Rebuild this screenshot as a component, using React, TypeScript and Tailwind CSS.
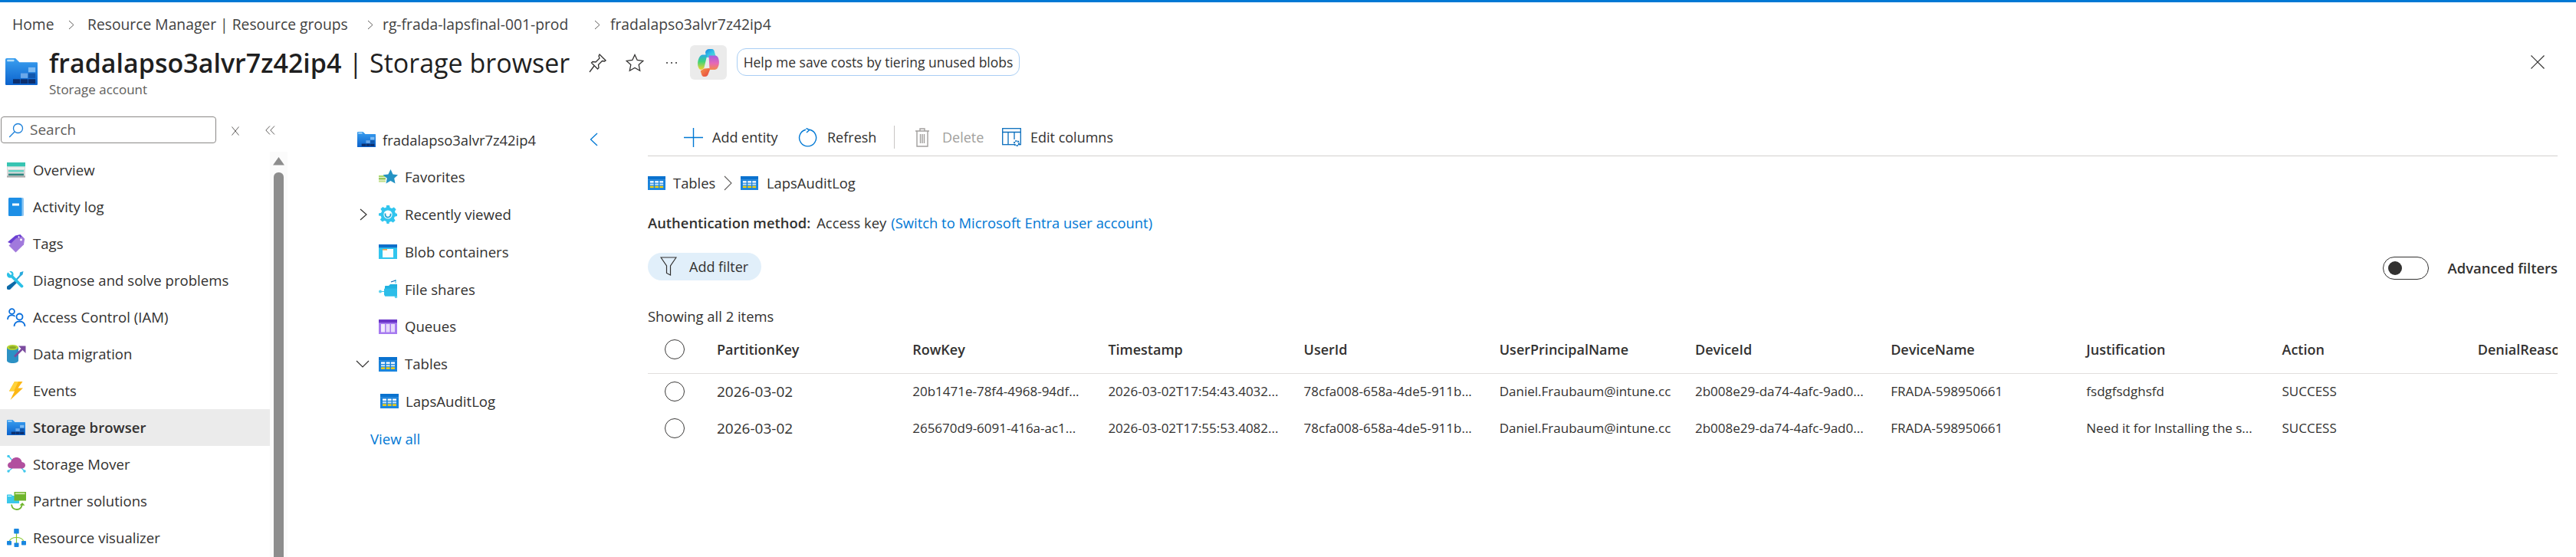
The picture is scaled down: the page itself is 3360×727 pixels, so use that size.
import React from "react";

const F = "font-['Open_Sans','Noto_Sans',sans-serif]";

function Folder({ w, h, id }: { w: number; h: number; id: string }) {
  return (
    <svg width={w} height={h} viewBox="0 0 24 20" className="shrink-0">
      <defs>
        <linearGradient id={id} x1="0" y1="0" x2="0" y2="1">
          <stop offset="0" stopColor="#3a9ff0" />
          <stop offset="1" stopColor="#0b62cc" />
        </linearGradient>
      </defs>
      <path d="M0 1a1 1 0 0 1 1-1h6.5l3 3H23.4a.6.6 0 0 1 .6.6V19.4a.6.6 0 0 1-.6.6H.6a.6.6 0 0 1-.6-.6z" fill={`url(#${id})`} />
      <rect x="1.2" y="1" width="5.4" height="1.4" rx=".5" fill="#b5def9" />
      <rect x="5.700" y="15.600" width="5.300" height="3.300" fill="#0c2f6e" />
      <rect x="11.400" y="15.600" width="5.300" height="3.300" fill="#0c2f6e" />
      <rect x="17.100" y="15.600" width="5.300" height="3.300" fill="#0c2f6e" />
      <rect x="11.400" y="11.200" width="5.300" height="3.600" fill="#6aa8ea" />
      <rect x="17.100" y="11.200" width="5.300" height="3.600" fill="#1157ad" />
      <rect x="17.100" y="6.800" width="5.300" height="3.600" fill="#7fbbf2" />
    </svg>
  );
}

function TableIcon({ id, w = 24 }: { id: string; w?: number }) {
  return (
    <svg width={w} height={(w * 19) / 24} viewBox="0 0 24 19" className="shrink-0">
      <defs>
        <linearGradient id={id} x1="0" y1="0" x2="0" y2="1">
          <stop offset="0" stopColor="#0a78d6" />
          <stop offset="1" stopColor="#0f7fdc" />
        </linearGradient>
      </defs>
      <rect width="24" height="19" fill="#8fc4f0" />
      <rect width="24" height="4.6" fill="#0a72cf" />
      <rect x="0" y="4.6" width="24" height="14.4" fill={`url(#${id})`} opacity=".9" />
      <g fill="#ffffff">
        <rect x="3" y="6.5" width="5" height="2.4" />
        <rect x="9.6" y="6.5" width="5" height="2.4" />
        <rect x="16" y="6.5" width="5" height="2.4" />
      </g>
      <g fill="#b8dcf8">
        <rect x="3" y="10" width="5" height="2.4" />
        <rect x="9.6" y="10" width="5" height="2.4" />
        <rect x="16" y="10" width="5" height="2.4" />
      </g>
      <g fill="#f9d20a">
        <rect x="3" y="13.4" width="5" height="2.4" />
        <rect x="9.6" y="13.4" width="5" height="2.4" />
        <rect x="16" y="13.4" width="5" height="2.4" />
      </g>
    </svg>
  );
}

const icons: Record<string, React.ReactNode> = {
  overview: (
    <svg width="24" height="20" viewBox="0 0 24 20">
      <rect width="24" height="5.5" fill="#37c4b2" />
      <rect y="5.5" width="24" height="14" fill="#d9d9d9" />
      <rect x="1" y="6.5" width="22" height="2.2" fill="#f4f4f4" />
      <rect x="2" y="10" width="20" height="2.4" fill="#5fd3c4" />
      <rect x="2" y="14.6" width="20" height="2.6" fill="#2f8580" />
      <rect y="17.5" width="24" height="2" fill="#a9a9a9" />
    </svg>
  ),
  activity: (
    <svg width="22" height="24" viewBox="0 0 22 24">
      <rect x="1" width="20" height="24" rx="1.5" fill="#8fc7f2" />
      <rect x="1" width="17.5" height="24" rx="1.5" fill="#1d8fe6" />
      <rect x="6" y="7.5" width="9" height="3" fill="#ffffff" />
    </svg>
  ),
  tags: (
    <svg width="24" height="24" viewBox="0 0 24 24">
      <path d="M1 10 11 1.5 17.5 0 21 4 11.5 15z" fill="#6b3fd2" />
      <path d="M11.5 23.5 2.5 14.5 12 5 20.5 2.8 23.2 5.8 22 13.2z" fill="#a179dc" />
      <circle cx="18.5" cy="7" r="1.4" fill="#ffffff" />
      <circle cx="15.5" cy="3.2" r="1" fill="#ffffff" />
    </svg>
  ),
  diagnose: (
    <svg width="24" height="24" viewBox="0 0 24 24">
      <path d="M17 1.5l4.5-1.5-1 4.5-2.5 2L13 12l-1.5-1.5 5-5.5z" fill="#2aa9dc" />
      <path d="M10.5 12.5 13 15l-8.5 8.5a1.7 1.7 0 0 1-4-4z" fill="#0d6aa8" />
      <path d="M1.5 1.5 5 5l1.6-1.6L3.2 0C6 -.7 8.6 1 8.6 3.8c0 .7-.1 1.3-.4 1.9L21 18.5c1.5 1.5-1 4-2.6 2.7L5.6 8.4C3 9.5-.3 7.5 0 4.2c0-.9.6-2 1.5-2.7z" fill="#2ac0e6" />
    </svg>
  ),
  access: (
    <svg width="25" height="25" viewBox="0 0 25 25" fill="none" stroke="#0a6fdc" strokeWidth="1.8">
      <circle cx="6.5" cy="4.5" r="3.4" />
      <path d="M1 15c0-3.5 2.2-5.7 5.5-5.7 1.6 0 3 .5 4 1.5" />
      <circle cx="16.5" cy="11.5" r="4" />
      <path d="M9.5 24c0-4 3-6.5 7-6.5s7 2.5 7 6.5" />
    </svg>
  ),
  migration: (
    <svg width="25" height="24" viewBox="0 0 25 24">
      <path d="M0 3.5v17C0 22.5 3.2 24 7.5 24s7.5-1.5 7.5-3.5v-17z" fill="#2c91c4" />
      <ellipse cx="7.5" cy="3.5" rx="7.5" ry="3.5" fill="#b4d334" />
      <ellipse cx="7.5" cy="3.5" rx="4.6" ry="1.8" fill="#8ba929" />
      <path d="M10 15.5 20 5.5" stroke="#7b4b9e" strokeWidth="2.6" />
      <path d="M15 1.5h9.5V11z" fill="#7b4b9e" />
    </svg>
  ),
  events: (
    <svg width="18" height="24" viewBox="0 0 18 24">
      <path d="M7 0h10.5L11.5 8.5H18L1.5 24 7 12.5H0z" fill="#fcb714" />
      <path d="M7 0h5L6 12.5H0z" fill="#ffd33c" />
    </svg>
  ),
  mover: (
    <svg width="25" height="24" viewBox="0 0 25 24">
      <g stroke="#40c8ec" strokeWidth="1.2">
        <path d="M2 1 7 7M23 21l-4-4M2 21l5-4" />
      </g>
      <circle cx="2" cy="1.5" r="1.7" fill="#40c8ec" />
      <circle cx="23" cy="21" r="1.7" fill="#40c8ec" />
      <circle cx="2" cy="21" r="1.7" fill="#40c8ec" />
      <path d="M6 17.5c-3.4 0-5-2-5-4.2 0-2.3 1.8-4 4-4C6 5 9 3 12.5 3c3.800 0 6.700 2.700 7 6.100 2.400.2 4.500 1.700 4.500 4.200s-2 4.200-4.800 4.200z" fill="#b14f9e" />
    </svg>
  ),
  partner: (
    <svg width="25" height="25" viewBox="0 0 25 25">
      <path d="M0 4a.6.6 0 0 1 .6-.6H6l1.500 1.500H16V15H0z" fill="#3bc8ea" />
      <rect x="1" y="5" width="5" height="1" fill="#d6f3fb" />
      <rect x="9.500" y="0" width="15.500" height="11.500" fill="#6fb52c" />
      <rect x="11" y="1.200" width="12.500" height="2" fill="#cfe8a8" />
      <path d="M6 16.500c.5 4 3 6.500 7 6.500s6-2.500 6.700-6" fill="none" stroke="#6fb52c" strokeWidth="1.800" />
      <path d="M16.500 17.500l3.700-3.500 3.300 3.800z" fill="#6fb52c" />
    </svg>
  ),
  visual: (
    <svg width="25" height="24" viewBox="0 0 25 24">
      <g stroke="#86c832" strokeWidth="1.200" fill="none">
        <path d="M12.500 6V20" />
        <path d="M3 17c1.500-4.500 5-5.500 9.500-5.500S20.500 12.500 22 17" />
      </g>
      <rect x="9.200" y="0" width="6.500" height="6.500" rx=".8" fill="#1a87e0" />
      <rect x="0" y="16" width="6" height="5.500" rx=".8" fill="#1a87e0" />
      <rect x="19" y="16" width="6" height="5.500" rx=".8" fill="#1a87e0" />
      <rect x="9.500" y="18.500" width="6" height="5.500" rx=".8" fill="#1a87e0" />
    </svg>
  ),
  favorites: (
    <svg width="25" height="20" viewBox="0 0 25 20">
      <rect x="0" y="8" width="9" height="2.300" fill="#a9d86a" />
      <rect x="0" y="11.200" width="9" height="2.300" fill="#8cc24e" />
      <rect x="0" y="14.400" width="9" height="2.300" fill="#c2e08f" />
      <path d="M15.500 0l3 6.400 6.500.9-4.800 4.500 1.300 6.700-6-3.400-6 3.400 1.300-6.700L5.500 7.300l6.900-.9z" fill="#2493c4" />
    </svg>
  ),
  recent: (
    <svg width="24" height="24" viewBox="0 0 24 24">
      <path d="M10 0h4l.7 3.100 2.400 1 2.700-1.700 2.800 2.800-1.700 2.700 1 2.400L24 11v3l-3.100.7-1 2.400 1.700 2.700-2.800 2.800-2.700-1.700-2.400 1L13.500 24h-3l-.7-3.100-2.400-1-2.700 1.700-2.800-2.800 1.700-2.700-1-2.400L0 13.500v-3l3.100-.7 1-2.400L2.400 4.700l2.800-2.800 2.700 1.700 2-1z" fill="#31c5ee" />
      <circle cx="12" cy="12" r="5.600" fill="#ffffff" />
      <path d="M8.700 10.500c-.8 3 1 5.200 3.300 5.200s4-2 3.400-5" fill="none" stroke="#1ba3d6" strokeWidth="1.800" />
    </svg>
  ),
  blob: (
    <svg width="24" height="19" viewBox="0 0 24 19">
      <rect width="24" height="19" fill="#31c5ee" />
      <rect width="24" height="4.200" fill="#0f6fca" />
      <rect x="5" y="6" width="14" height="11" fill="#fdfdfd" />
      <rect x="5" y="6" width="6" height="1.600" fill="#f6a141" />
    </svg>
  ),
  file: (
    <svg width="25" height="25" viewBox="0 0 25 25">
      <g stroke="#40c8ec" strokeWidth="1">
        <path d="M2 15.500h6M22 21v3M22 5V1" />
      </g>
      <circle cx="2" cy="15.500" r="2" fill="#5ad2ef" />
      <circle cx="22.500" cy="22.500" r="1.800" fill="#5ad2ef" />
      <circle cx="22" cy="1.200" r="1.100" fill="#5ad2ef" />
      <path d="M8 9a1 1 0 0 1 1-1h4l2-2h9v14.500a.9.900 0 0 1-.9.900H8z" fill="#1fb1e0" />
      <path d="M7 12.500a1 1 0 0 1 1-1h16v9a.9.900 0 0 1-.9.900H8.500L7 20z" fill="#2cbde8" />
      <path d="M16 3l6-2" stroke="#0a5fa8" strokeWidth="1.200" />
    </svg>
  ),
  queues: (
    <svg width="24" height="19" viewBox="0 0 24 19">
      <rect width="24" height="19" fill="#a67af0" />
      <rect width="24" height="4.200" fill="#6a35c8" />
      <rect x="3" y="6" width="5" height="10.500" fill="#f1e9fc" />
      <rect x="9.500" y="6" width="5" height="10.500" fill="#e6d9fa" />
      <rect x="16" y="6" width="5" height="10.500" fill="#e6d9fa" />
    </svg>
  ),
};

const Search = (
  <svg width="20" height="20" viewBox="0 0 20 20" fill="none" stroke="#1a7fd9" strokeWidth="1.300">
    <circle cx="12.500" cy="7.500" r="6" />
    <path d="M8 12 1.200 19" />
  </svg>
);

function NavRow({ icon, label, active }: { icon: string; label: string; active?: boolean }) {
  return (
    <div className={`flex h-[48px] items-center text-[18.600px] ${active ? "bg-[#ebebeb] font-semibold" : ""}`}>
      <div className="flex w-[43px] shrink-0 justify-center pr-[4px] pl-[3px]">
        {active ? <Folder w={24} h={20} id="navfolder" /> : icons[icon]}
      </div>
      <span className="whitespace-nowrap">{label}</span>
    </div>
  );
}

function TreeRow({ chevron, icon, label, tight }: { chevron?: "right" | "down"; icon: React.ReactNode; label: string; tight?: boolean }) {
  return (
    <div className="flex h-[48.800px] items-center text-[18.600px]">
      <div className="flex w-[28px] shrink-0 items-center">
        {chevron === "right" && (
          <svg width="11" height="16" viewBox="0 0 11 16" fill="none" stroke="#323130" strokeWidth="1.200" className="ml-[3px]">
            <path d="M1 1l8 7-8 7" />
          </svg>
        )}
        {chevron === "down" && (
          <svg width="18" height="11" viewBox="0 0 18 11" fill="none" stroke="#323130" strokeWidth="1.200" className="ml-[-2px]">
            <path d="M1 1l8 8 8-8" />
          </svg>
        )}
      </div>
      <div className={`flex w-[34px] shrink-0 items-center ${tight ? "pl-[2px]" : ""}`}>{icon}</div>
      <span className={`whitespace-nowrap ${tight ? "ml-[1px]" : ""}`}>{label}</span>
    </div>
  );
}

const columns = ["PartitionKey", "RowKey", "Timestamp", "UserId", "UserPrincipalName", "DeviceId", "DeviceName", "Justification", "Action", "DenialReason"];
const rows = [
  ["2026-03-02", "20b1471e-78f4-4968-94df...", "2026-03-02T17:54:43.4032...", "78cfa008-658a-4de5-911b...", "Daniel.Fraubaum@intune.cc", "2b008e29-da74-4afc-9ad0...", "FRADA-598950661", "fsdgfsdghsfd", "SUCCESS", ""],
  ["2026-03-02", "265670d9-6091-416a-ac1...", "2026-03-02T17:55:53.4082...", "78cfa008-658a-4de5-911b...", "Daniel.Fraubaum@intune.cc", "2b008e29-da74-4afc-9ad0...", "FRADA-598950661", "Need it for Installing the s...", "SUCCESS", ""],
];

function Radio() {
  return (
    <div className="flex w-[90px] shrink-0 pl-[22px]">
      <div className="h-[26px] w-[26px] rounded-full border-[1.5px] border-[#3b3a39]" />
    </div>
  );
}

export default function App() {
  return (
    <div className={`${F} flex h-[727px] w-[3360px] flex-col overflow-hidden bg-white text-[#323130]`}>
      <div className="h-[3px] shrink-0 bg-[#0078d4]" />

      <div className="flex h-[58px] shrink-0 items-center pl-[16px] text-[19.300px] text-[#424242]">
        <span className="w-[73px] shrink-0">Home</span>
        <span className="w-[25px] shrink-0"><Chevron /></span>
        <span className="w-[365px] shrink-0 whitespace-nowrap">Resource Manager | Resource groups</span>
        <span className="w-[20px] shrink-0"><Chevron /></span>
        <span className="w-[276px] shrink-0 whitespace-nowrap">rg-frada-lapsfinal-001-prod</span>
        <span className="w-[21px] shrink-0"><Chevron /></span>
        <span className="whitespace-nowrap">fradalapso3alvr7z42ip4</span>
      </div>

      <div className="flex h-[79px] shrink-0 items-start">
        <div className="w-[64px] shrink-0 pl-[7px] pt-[15px]">
          <Folder w={42} h={35} id="hdrfolder" />
        </div>
        <div className="w-[700px] shrink-0">
          <div className="flex h-[42px] items-center whitespace-nowrap text-[34px] text-[#1f1f1f]">
            <span className="font-semibold">fradalapso3alvr7z42ip4</span>
            <span className="ml-[9px] font-normal">|</span>
            <span className="ml-[9px] font-normal">Storage browser</span>
          </div>
          <div className="flex h-[28px] items-center text-[17px] text-[#605e5c]">Storage account</div>
        </div>
        <div className="mt-[5px] flex items-center">
          <div className="flex h-[32px] w-[32px] items-center justify-center">
            <svg width="24" height="26" viewBox="0 0 24 26" fill="none" stroke="#323130" strokeWidth="1.300">
              <path d="M14 2 22 10 20.500 11 17.500 10.500 12.500 15.500 13 19.500 11.500 21 3.500 13 5 11.500 9 12 14 7 13 4z" />
              <path d="M7 17 1 25" />
            </svg>
          </div>
          <div className="ml-[16px] flex h-[32px] w-[32px] items-center justify-center">
            <svg width="24" height="24" viewBox="0 0 24 24" fill="none" stroke="#323130" strokeWidth="1.300">
              <path d="M12 1.500l3.200 7 7.600.9-5.600 5.200 1.500 7.600L12 18.400 5.300 22.200l1.500-7.600L1.200 9.400l7.600-.9z" />
            </svg>
          </div>
          <div className="ml-[16px] flex h-[32px] w-[32px] items-center justify-center gap-[4px]">
            <i className="h-[2px] w-[2px] rounded-full bg-[#323130]" />
            <i className="h-[2px] w-[2px] rounded-full bg-[#323130]" />
            <i className="h-[2px] w-[2px] rounded-full bg-[#323130]" />
          </div>
        </div>
        <div className="ml-[8px] flex h-[45px] w-[48px] shrink-0 translate-y-[-2px] items-center justify-center rounded-[6px] bg-[#ebebeb]">
          <svg width="28" height="36" viewBox="0 0 28 36">
            <defs>
              <linearGradient id="cpa" x1="0" y1="0" x2="1" y2="1">
                <stop offset="0" stopColor="#1b7ee0" />
                <stop offset=".5" stopColor="#33c3e8" />
                <stop offset="1" stopColor="#6be0c2" />
              </linearGradient>
              <linearGradient id="cpb" x1="0" y1="0" x2="0" y2="1">
                <stop offset="0" stopColor="#2aa8e8" />
                <stop offset=".45" stopColor="#3ed47a" />
                <stop offset="1" stopColor="#f6d32c" />
              </linearGradient>
              <linearGradient id="cpc" x1="0" y1="0" x2="0" y2="1">
                <stop offset="0" stopColor="#a65de0" />
                <stop offset=".55" stopColor="#e667b5" />
                <stop offset="1" stopColor="#f58a4a" />
              </linearGradient>
              <linearGradient id="cpd" x1="0" y1="0" x2="1" y2="1">
                <stop offset="0" stopColor="#f6964a" />
                <stop offset="1" stopColor="#e6423f" />
              </linearGradient>
            </defs>
            <path d="M10 4C11 1.500 12.500 0 15 0h4c1.200 0 2 1 2.600 2.600L24 11H11z" fill="url(#cpa)" />
            <path d="M1 24C-.5 21 0 16 1.200 13 2.500 9.500 4 7.500 7.500 7.500h5L8.500 24c-.7 2-2.500 3-4.200 3-1.500 0-2.600-1.200-3.300-3z" fill="url(#cpb)" />
            <path d="M14.500 8.500h8c3 0 4.800 2.500 5.300 7 .4 3.500-.4 7-2 9.500-1 1.500-2.500 2-4.800 2H15.500z" fill="url(#cpc)" />
            <path d="M8.500 25.500 15.500 25 16 27 14 32c-.8 2.500-2 4-4.500 4H8c-1.500 0-2.300-1-2.800-2.500l-1.500-5z" fill="url(#cpd)" />
          </svg>
        </div>
        <div className="ml-[13px] mt-[2px] flex h-[36px] w-[369px] shrink-0 items-center justify-center rounded-[12px] border border-[#a9cef4] text-[17.500px] whitespace-nowrap text-[#323130]">
          Help me save costs by tiering unused blobs
        </div>
        <div className="ml-auto mr-[41px] mt-[11px]">
          <svg width="18" height="18" viewBox="0 0 18 18" fill="none" stroke="#323130" strokeWidth="1.200"><path d="M.5.5l17 17M17.500.5l-17 17" /></svg>
        </div>
      </div>

      <div className="flex min-h-0 flex-1">
        <div className="flex w-[375px] shrink-0 flex-col">
          <div className="flex pt-[12px]">
            <div className="ml-[1px] flex h-[35px] w-[281px] shrink-0 items-center rounded-[4px] border border-[#8a8886] pl-[9px] text-[19px] text-[#605e5c]">
              {Search}
              <span className="ml-[8px]">Search</span>
            </div>
            <div className="flex h-[35px] w-[48px] items-center justify-center pl-[1px] pt-[2px]">
              <svg width="10" height="12" viewBox="0 0 10 12" fill="none" stroke="#605e5c" strokeWidth="1"><path d="M.500.500l9 11M9.500.500l-9 11" /></svg>
            </div>
            <div className="flex h-[35px] w-[44px] items-center justify-center pt-[1px]">
              <svg width="13" height="12" viewBox="0 0 13 12" fill="none" stroke="#605e5c" strokeWidth="1"><path d="M6 .500.800 6 6 11.500M12 .500 6.800 6 12 11.500" /></svg>
            </div>
          </div>
          <div className="mt-[11px] flex min-h-0 flex-1">
            <div className="w-[352px] shrink-0 text-[#323130]">
              <NavRow icon="overview" label="Overview" />
              <NavRow icon="activity" label="Activity log" />
              <NavRow icon="tags" label="Tags" />
              <NavRow icon="diagnose" label="Diagnose and solve problems" />
              <NavRow icon="access" label="Access Control (IAM)" />
              <NavRow icon="migration" label="Data migration" />
              <NavRow icon="events" label="Events" />
              <NavRow icon="storage" label="Storage browser" active />
              <NavRow icon="mover" label="Storage Mover" />
              <NavRow icon="partner" label="Partner solutions" />
              <NavRow icon="visual" label="Resource visualizer" />
            </div>
            <div className="flex w-[23px] shrink-0 flex-col items-center bg-[#fbfbfb]">
              <svg width="15" height="11" viewBox="0 0 15 11" className="mt-[7px]"><path d="M7.500 0 15 10.500H0z" fill="#8d8d8d" /></svg>
              <div className="mt-[9px] w-[13px] flex-1 rounded-t-[6px] bg-[#8d8d8d]" />
            </div>
          </div>
        </div>

        <div className="w-[470px] shrink-0 pl-[91px] pt-[18px] text-[#323130]">
          <div className="flex h-[48.800px] w-[315px] items-center text-[18.400px]">
            <Folder w={24} h={20} id="treefolder" />
            <span className="ml-[9px] whitespace-nowrap">fradalapso3alvr7z42ip4</span>
            <svg width="11" height="18" viewBox="0 0 11 18" fill="none" stroke="#0078d4" strokeWidth="1.300" className="ml-auto mr-[1px]"><path d="M10 1 1.500 9 10 17" /></svg>
          </div>
          <TreeRow icon={icons.favorites} label="Favorites" />
          <TreeRow chevron="right" icon={icons.recent} label="Recently viewed" />
          <TreeRow icon={icons.blob} label="Blob containers" />
          <TreeRow icon={icons.file} label="File shares" />
          <TreeRow icon={icons.queues} label="Queues" />
          <TreeRow chevron="down" icon={<TableIcon id="t1" />} label="Tables" />
          <TreeRow icon={<TableIcon id="t2" />} label="LapsAuditLog" tight />
          <div className="flex h-[48.800px] items-center pl-[17px] text-[18.600px] text-[#0078d4]">View all</div>
        </div>

        <div className="mr-[24px] min-w-0 flex-1">
          <div className="flex h-[64px] items-center border-b border-[#d2d0ce] pl-[47px] pt-[15px] text-[18px]">
            <svg width="25" height="25" viewBox="0 0 25 25" stroke="#0078d4" strokeWidth="1.400"><path d="M12.500 0v25M0 12.500h25" /></svg>
            <span className="ml-[12px] w-[89px] whitespace-nowrap">Add entity</span>
            <svg width="25" height="25" viewBox="0 0 25 25" fill="none" stroke="#0078d4" strokeWidth="1.400" className="ml-[23px]">
              <path d="M10 2.200a11 11 0 1 0 5.200 0" />
              <path d="M10.500 .500 15 2.500 11 6" />
            </svg>
            <span className="ml-[13px] w-[62px] whitespace-nowrap">Refresh</span>
            <div className="ml-[25px] h-[30px] w-px bg-[#c8c6c4]" />
            <svg width="20" height="25" viewBox="0 0 20 25" fill="none" stroke="#a19f9d" strokeWidth="1.400" className="ml-[26px]">
              <path d="M1 4h18M7 4V1h6v3M3 4v20h14V4M7.500 8v12M10 8v12M12.500 8v12" />
            </svg>
            <span className="ml-[16px] w-[55px] whitespace-nowrap text-[#a19f9d]">Delete</span>
            <svg width="25" height="25" viewBox="0 0 25 25" fill="none" stroke="#0a6ebd" strokeWidth="1.300" className="ml-[23px]">
              <rect x=".700" y=".700" width="23.600" height="21" />
              <path d="M.700 5.500h23.600M8 5.500V21.700M16 5.500V15" />
              <circle cx="19" cy="20" r="3" fill="#fff" strokeWidth="2" strokeDasharray="2 1" />
            </svg>
            <span className="ml-[12px] whitespace-nowrap">Edit columns</span>
          </div>

          <div className="mt-[19px] flex h-[32px] items-center text-[18.400px]">
            <TableIcon id="b1" w={23} />
            <span className="ml-[10px] w-[52px]">Tables</span>
            <svg width="11" height="20" viewBox="0 0 11 20" fill="none" stroke="#605e5c" strokeWidth="1.100" className="ml-[14px]"><path d="M1 1l9 9-9 9" /></svg>
            <span className="ml-[11px]"><TableIcon id="b2" w={23} /></span>
            <span className="ml-[11px]">LapsAuditLog</span>
          </div>

          <div className="mt-[22px] flex h-[28px] items-center whitespace-nowrap text-[18.400px]">
            <span className="font-semibold">Authentication method:</span>
            <span className="ml-[8px]">Access key</span>
            <span className="ml-[6px] text-[#0078d4]">(Switch to Microsoft Entra user account)</span>
          </div>

          <div className="mt-[25px] flex h-[36px] items-center justify-between">
            <div className="flex h-[36px] w-[148px] items-center rounded-full bg-[#e1effa] pl-[16px] text-[18px]">
              <svg width="22" height="26" viewBox="0 0 22 26" fill="none" stroke="#323130" strokeWidth="1.200"><path d="M1 1h20l-7.500 11v12l-5-2.500V12z" /></svg>
              <span className="ml-[16px] whitespace-nowrap">Add filter</span>
            </div>
            <div className="mt-[4px] flex items-center">
              <div className="flex h-[30px] w-[60px] items-center rounded-full border border-[#323130] pl-[6px]">
                <div className="h-[18px] w-[18px] rounded-full bg-[#323130]" />
              </div>
              <span className="ml-[25px] whitespace-nowrap text-[18.400px] font-semibold">Advanced filters</span>
            </div>
          </div>

          <div className="mt-[33px] flex h-[28px] items-center text-[18.400px]">Showing all 2 items</div>

          <div className="overflow-hidden">
            <div className="flex h-[61px] w-[2491px] items-center border-b border-[#e1dfdd] pb-[2px]">
              <Radio />
              {columns.map((c, i) => (
                <div key={c} className={`shrink-0 whitespace-nowrap text-[18px] font-semibold ${i === 9 ? "w-[105px] overflow-hidden" : "w-[255.200px]"}`}>{c}</div>
              ))}
            </div>
            {rows.map((r, ri) => (
              <div key={ri} className="flex h-[48px] w-[2491px] items-center pb-[2px]">
                <Radio />
                {r.map((v, i) => (
                  <div key={i} className={`shrink-0 whitespace-nowrap ${i === 0 ? "text-[19px]" : "text-[17px]"} ${i === 9 ? "w-[105px]" : "w-[255.200px]"}`}>{v}</div>
                ))}
              </div>
            ))}
          </div>
        </div>
      </div>
    </div>
  );
}

function Chevron() {
  return (
    <svg width="8" height="13" viewBox="0 0 8 13" fill="none" stroke="#605e5c" strokeWidth="1"><path d="M1 1l6 5.500L1 12" /></svg>
  );
}
